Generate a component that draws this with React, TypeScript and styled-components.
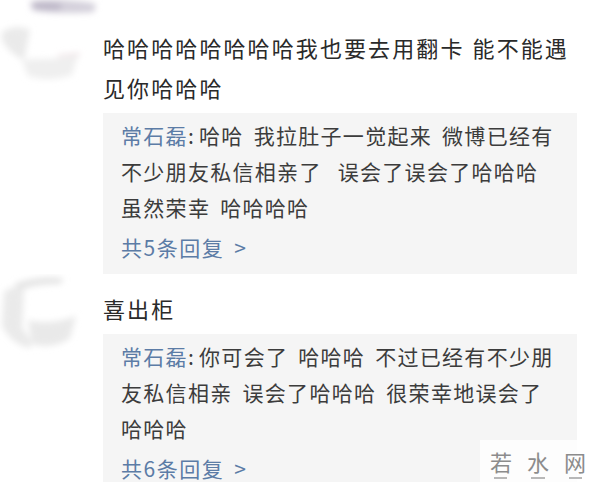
import styled, { createGlobalStyle } from "styled-components";

const GlobalStyle = createGlobalStyle`
  body {
    margin: 0;
    background: #ffffff;
    font-family: "Noto Sans CJK SC", "Noto Sans", sans-serif;
  }
`;

const Page = styled.div`
  position: relative;
  width: 600px;
  height: 482px;
  overflow: hidden;
  background: #ffffff;
`;

const Comment = styled.div`
  display: flex;
  align-items: flex-start;
`;

const AvatarCol = styled.div`
  flex: none;
  width: 103px;
  height: 90px;
`;

const Body = styled.div<{ $top: number }>`
  width: 474px;
  padding-top: ${(p) => p.$top}px;
`;

const MainText = styled.div`
  font-size: 22px;
  line-height: 40px;
  letter-spacing: 2.1px;
  word-spacing: 1px;
  color: #2a2a2a;
  white-space: nowrap;
`;

const ReplyBox = styled.div`
  margin-top: 6px;
  background: #f5f5f5;
  padding: 4px 12px 9px 18px;
  font-size: 21px;
  line-height: 36px;
  letter-spacing: 1.3px;
  word-spacing: 4px;
  color: #3c3c3c;
`;

const Line = styled.div`
  white-space: nowrap;
`;

const Wide = styled.span`
  display: inline-block;
  width: 16px;
`;

const Name = styled.span`
  color: #5c7ca6;
`;

const Colon = styled.span`
  margin-right: 4px;
`;

const More = styled.div`
  margin-top: 4px;
  color: #5c7ca6;
  letter-spacing: 1.5px;
  white-space: nowrap;
`;

const Watermark = styled.div`
  position: absolute;
  right: 0;
  bottom: 0;
  width: 120px;
  height: 42px;
  background: rgba(255, 255, 255, 0.82);
  display: flex;
  flex-direction: column;
  align-items: center;
  justify-content: flex-end;
  padding: 0 4px 1px 0;
  box-sizing: border-box;
`;

const MarkText = styled.div`
  display: flex;
  gap: 15px;
  font-size: 22px;
  line-height: 28px;
  color: #8c8c8c;
`;

const MarkSub = styled.div`
  display: flex;
  gap: 24px;
  height: 6px;
  align-items: center;
`;

const Dash = styled.span<{ $w: number }>`
  display: block;
  width: ${(p) => p.$w}px;
  height: 2px;
  background: #b8b8b8;
`;

function AvatarOne() {
  return (
    <svg width="103" height="90" viewBox="0 0 103 90">
      <defs>
        <filter id="b1" x="-30%" y="-30%" width="160%" height="160%">
          <feGaussianBlur stdDeviation="3" />
        </filter>
      </defs>
      <g filter="url(#b1)">
        <path d="M30 2 C45 -2 80 0 96 4 L94 12 C70 14 45 13 32 10 Z" fill="#d4d0db" />
        <path d="M32 3 C40 1 55 2 62 4 L60 10 C50 11 40 10 34 9 Z" fill="#bdb7c8" />
        <path d="M2 32 C10 26 22 26 30 30 L24 60 C14 56 6 48 2 40 Z" fill="#eaeaea" />
        <path d="M22 60 C40 58 60 60 78 55 L72 75 C58 80 40 80 28 76 Z" fill="#efefef" />
        <path d="M58 56 L80 54" stroke="#ead9dd" strokeWidth="2" />
      </g>
    </svg>
  );
}

function AvatarTwo() {
  return (
    <svg width="103" height="90" viewBox="0 0 103 90">
      <defs>
        <filter id="b2" x="-30%" y="-30%" width="160%" height="160%">
          <feGaussianBlur stdDeviation="3" />
        </filter>
      </defs>
      <g filter="url(#b2)">
        <path d="M14 10 C30 4 50 2 64 5 L60 10 C45 10 30 12 20 16 Z" fill="#e4e4e4" />
        <path d="M4 18 C10 12 20 12 24 16 L22 54 C30 64 34 70 30 74 C18 72 8 64 2 52 Z" fill="#eaeaea" />
        <path d="M28 46 C44 50 60 48 76 42 L70 64 C60 72 44 74 32 70 Z" fill="#e9e9e9" />
      </g>
    </svg>
  );
}

type Reply = { name: string; lines: string[][]; more: string };

type Item = {
  top: number;
  avatar: "one" | "two";
  text: string[];
  reply: Reply;
};

const items: Item[] = [
  {
    top: 27,
    avatar: "one",
    text: ["哈哈哈哈哈哈哈哈我也要去用翻卡 能不能遇", "见你哈哈哈"],
    reply: {
      name: "常石磊",
      lines: [
        ["哈哈 我拉肚子一觉起来 微博已经有"],
        ["不少朋友私信相亲了", "误会了误会了哈哈哈"],
        ["虽然荣幸 哈哈哈哈"],
      ],
      more: "共5条回复 >",
    },
  },
  {
    top: 14,
    avatar: "two",
    text: ["喜出柜"],
    reply: {
      name: "常石磊",
      lines: [["你可会了 哈哈哈 不过已经有不少朋"], ["友私信相亲 误会了哈哈哈 很荣幸地误会了"], ["哈哈哈"]],
      more: "共6条回复 >",
    },
  },
];

export default function App() {
  return (
    <Page>
      <GlobalStyle />
      {items.map((item, i) => (
        <Comment key={i}>
          <AvatarCol>{item.avatar === "one" ? <AvatarOne /> : <AvatarTwo />}</AvatarCol>
          <Body $top={item.top}>
            <MainText>
              {item.text.map((t, j) => (
                <Line key={j}>{t}</Line>
              ))}
            </MainText>
            <ReplyBox>
              {item.reply.lines.map((parts, j) => (
                <Line key={j}>
                  {j === 0 && (
                    <>
                      <Name>{item.reply.name}</Name>
                      <Colon>:</Colon>
                    </>
                  )}
                  {parts.map((p, k) => (
                    <span key={k}>
                      {k > 0 && <Wide />}
                      {p}
                    </span>
                  ))}
                </Line>
              ))}
              <More>{item.reply.more}</More>
            </ReplyBox>
          </Body>
        </Comment>
      ))}
      <Watermark>
        <MarkText>
          <span>若</span>
          <span>水</span>
          <span>网</span>
        </MarkText>
        <MarkSub>
          <Dash $w={13} />
          <Dash $w={14} />
          <Dash $w={13} />
        </MarkSub>
      </Watermark>
    </Page>
  );
}
